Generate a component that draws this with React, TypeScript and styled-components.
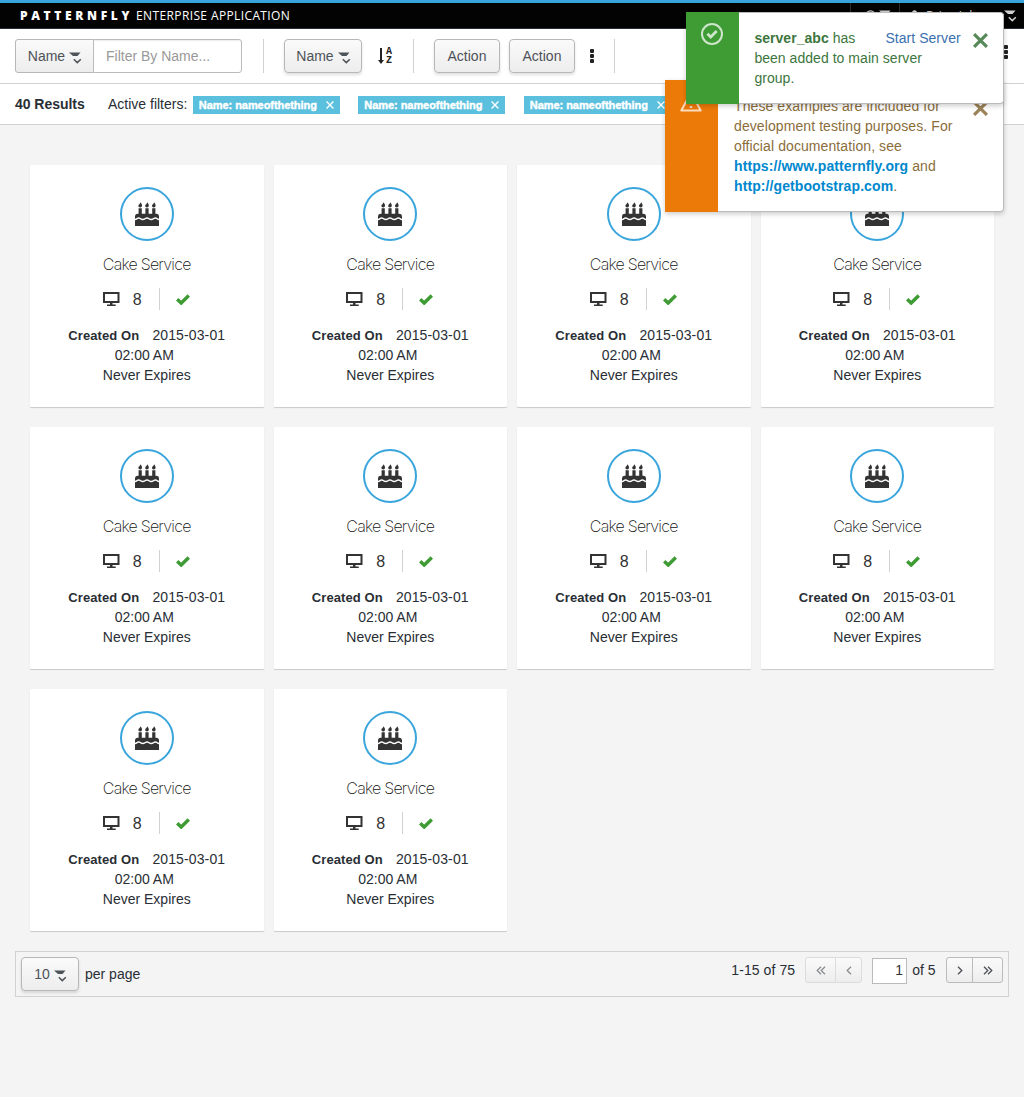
import React from "react";
import styled, { createGlobalStyle } from "styled-components";

const Global = createGlobalStyle`
  *{box-sizing:border-box}
  html{background:#f4f4f4}
  body{margin:0;background:#f4f4f4;color:#292e34;font:14px/20px "Liberation Sans",Arial,sans-serif}
  button,input{font:inherit;margin:0}
  svg{display:block;flex:none}
`;
const Page = styled.div`position:relative;width:1024px;height:1097px;overflow:hidden;`;
const Header = styled.header`height:29px;background:#030303;border-top:3px solid #39a5dc;border-bottom:1px solid #292e34;display:flex;align-items:center;padding-left:20px;color:#fff;font:12px/16px "Open Sans",sans-serif;`;
const Brand = styled.b`font-weight:800;letter-spacing:3.65px;width:116px;white-space:nowrap;`;
const Product = styled.span`letter-spacing:.38px;font-weight:400;`;
const Utility = styled.div`margin-left:auto;display:flex;height:25px;color:#d1d1d1;`;
const UtilityItem = styled.div<{ $w: number; $pad: number; $gap: number }>`width:${p => p.$w}px;border-left:1px solid #2b2b2b;display:flex;align-items:flex-start;gap:${p => p.$gap}px;padding:7px 0 0 ${p => p.$pad}px;white-space:nowrap;`;
const UserName = styled.span`width:71px;line-height:15px;margin-top:-2px;`;
const Toolbar = styled.div`height:55px;background:#fff;border-bottom:1px solid #d1d1d1;display:flex;align-items:center;padding-left:15px;`;
const Button = styled.button<{ $w: number; $flat?: boolean }>`
  flex:none;width:${p => p.$w}px;height:34px;padding:0;border:1px solid #b7b7b7;border-radius:${p => (p.$flat ? "3px 0 0 3px" : "4px")};
  background:linear-gradient(#fafafa,#ededed);color:#4d5258;display:flex;align-items:center;justify-content:center;gap:5px;
  box-shadow:${p => (p.$flat ? "none" : "0 2px 3px rgba(3,3,3,.12)")};
  svg{margin-top:4px}
`;
const MenuButton = styled(Button)`padding-left:1px;gap:4px;`;
const ActionButton = styled(Button)`& + &{margin-left:9px}`;
const FilterInput = styled.input`width:149px;height:34px;margin-left:-1px;border:1px solid #bbb;border-radius:0 3px 3px 0;padding:0 12px;background:#fff;box-shadow:inset 0 1px 1px rgba(3,3,3,.075);&::placeholder{color:#999;opacity:1}`;
const Divider = styled.i<{ $l: number; $r: number }>`flex:none;width:1px;height:34px;background:#d1d1d1;margin:0 ${p => p.$r}px 0 ${p => p.$l}px;`;
const Sort = styled.div`display:flex;margin-left:16px;width:35px;gap:2px;align-items:center;color:#222;`;
const SortLetters = styled.span`display:flex;flex-direction:column;align-items:center;font:bold 10px/9px "Liberation Mono",monospace;`;
const Kebab = styled.div<{ $l: number; $up?: boolean }>`margin-left:${p => p.$l}px;padding-bottom:${p => (p.$up ? 9 : 0)}px;display:flex;flex-direction:column;gap:1px;i{width:4px;height:4px;border-radius:1px;background:#222}`;
const Results = styled.div`height:41px;background:#fff;border-bottom:1px solid #d1d1d1;display:flex;align-items:center;padding-left:15px;b{width:93px;letter-spacing:-.03px}`;
const Chips = styled.div`display:flex;gap:18.5px;margin:1px 0 0 5.5px;`;
const Chip = styled.span`width:147px;height:18px;background:#5bc0de;color:#fff;font-size:11px;line-height:18px;font-weight:bold;display:flex;align-items:center;padding:0 6px;justify-content:space-between;letter-spacing:-.06px;-webkit-text-stroke:.4px #fff;`;
const Grid = styled.main`display:grid;grid-template-columns:repeat(4,1fr);gap:20px 10px;padding:40px 30px 20px;`;
const Card = styled.article`height:242px;background:#fff;border-radius:1px;box-shadow:0 1px 1px rgba(3,3,3,.175);display:flex;flex-direction:column;align-items:center;padding-top:22px;`;
const Circle = styled.div`width:54px;height:54px;border:2px solid #39a5dc;border-radius:50%;display:flex;align-items:center;justify-content:center;color:#333;`;
const Title = styled.h2`margin:13px 0 0;font:200 16px/20px Inter,sans-serif;letter-spacing:-.76px;color:#111;`;
const Status = styled.div`display:flex;align-items:center;height:22px;margin:14px 1px 0 0;font-size:16px;color:#333;`;
const Count = styled.span`margin:2px 17px 0 13px;`;
const StatusRule = styled.i`width:1px;height:22px;background:#d1d1d1;margin-right:16px;`;
const Details = styled.div`margin-top:15px;text-align:center;width:100%;`;
const Created = styled.div`display:flex;justify-content:center;gap:13px;b{font-size:13px;letter-spacing:.1px;padding-top:1px;height:20px}span{letter-spacing:.12px}`;
const Time = styled.div`padding-right:5px;`;
const Pager = styled.footer`margin:0 15px;height:46px;border:1px solid #d1d1d1;display:flex;align-items:flex-start;padding:5px;`;
const PerPage = styled.span`margin:7px 0 0 6px;`;
const Range = styled.span`margin:3px 10px 0 auto;letter-spacing:.08px;`;
const PageGroup = styled.div<{ $off?: boolean }>`height:26px;border:1px solid ${p => (p.$off ? "#dcdcdc" : "#bbb")};border-radius:3px;background:linear-gradient(#fafafa,#ededed);display:flex;color:${p => (p.$off ? "#8b8d8f" : "#4d5258")};`;
const PageStep = styled.button<{ $w: number; $line?: string }>`width:${p => p.$w}px;padding:0;border:0;border-right:${p => (p.$line ? "1px solid " + p.$line : "0")};background:none;color:inherit;display:flex;align-items:center;justify-content:center;`;
const PageInput = styled.input`width:35px;height:26px;margin:1px 5px 0 10px;border:1px solid #bbb;background:#fff;text-align:right;padding:0 3px 2px;color:#333;`;
const Of = styled.span`margin:3px 10.5px 0 0;`;
const Toast = styled.aside<{ $x: number; $y: number; $h: number; $ink: string }>`
  position:absolute;left:${p => p.$x}px;top:${p => p.$y}px;width:${p => 1004 - p.$x}px;height:${p => p.$h}px;display:flex;background:#fff;
  border:1px solid #bbb;border-left:0;border-radius:0 4px 4px 0;box-shadow:0 2px 5px rgba(3,3,3,.2);color:${p => p.$ink};
`;
const ToastIcon = styled.div<{ $c: string }>`flex:none;width:53px;margin:-1px 0;background:${p => p.$c};display:flex;justify-content:center;padding:11px 1px 0 0;color:rgba(255,255,255,.74);`;
const ToastText = styled.p<{ $w: number; $l: number; $track?: number }>`margin:15px 0 0 ${p => p.$l}px;width:${p => p.$w}px;white-space:nowrap;letter-spacing:${p => p.$track || 0}px;`;
const Start = styled.a`color:#3a6fb0;margin:15px 0 0;white-space:nowrap;letter-spacing:.05px;`;
const CloseBox = styled.button`border:0;background:none;padding:0;margin:20px 15px 0 auto;height:15px;color:inherit;opacity:.85;`;
const Link = styled.a`color:#0088ce;font-weight:bold;`;

const Caret = () => <svg width="13" height="12" viewBox="0 0 13 12"><path d="M0 .5h11.5L8.5 4H4z" fill="currentColor" /><path d="M4.8 7.3 8.3 10.6 11.8 7.3" fill="none" stroke="currentColor" strokeWidth="1.5" /></svg>;
const Close = ({ s, w }: { s: number; w: number }) => <svg width={s} height={s} viewBox="0 0 14 14"><path d="M1 1 13 13M13 1 1 13" stroke="currentColor" strokeWidth={w} /></svg>;
const Cake = () => (
  <svg width="24" height="24" viewBox="0 0 24 24" fill="currentColor">
    <path d="M3.6 6.3h3.2v5.5h3.6V6.3h3.2v5.5h3.6V6.3h3.2v5.5h.8q2.8.2 2.8 2.8v2.1c-1.5 0-1.7-1.4-3.6-1.4-2 0-2.1 1.4-4.2 1.4s-2.3-1.4-4.2-1.4-2.1 1.4-4.2 1.4-2.2-1.4-4.1-1.4S1.5 16.7 0 16.7v-2.1q0-2.6 2.8-2.8h.8z" />
    <path d="M0 18.2c2 0 2.2-1.4 3.7-1.4s2 1.4 4.1 1.4 2.5-1.4 4.2-1.4 2 1.4 4.2 1.4 2.6-1.4 4.2-1.4 1.7 1.4 3.6 1.4V24H0z" />
    {[5.2, 12, 18.8].map(x => <path key={x} d={`M${x + .3} .2c1 1.4 1.5 2.2 1.5 3.2 0 1.2-.7 2-1.8 2s-1.8-.7-1.8-1.7c0-1.4 1.9-1.700 2.100-3.500z`} />)}
  </svg>
);
const Screen = () => <svg width="17" height="15" viewBox="0 0 17 15"><path d="M1 1h14.5v9H1z" fill="none" stroke="currentColor" strokeWidth="2" /><path d="M7 10h2.5v2.5h3.2V14H4v-1.5h3z" fill="currentColor" /></svg>;
const Check = () => <svg width="14" height="11" viewBox="0 0 14 11"><path d="M1.2 5.3 5.2 9 12.8 1.5" fill="none" stroke="#3f9c35" strokeWidth="3.5" /></svg>;
const Angle = ({ dir, two }: { dir: number; two?: boolean }) => <svg width="10" height="9" viewBox="0 0 10 9"><g transform={dir > 0 ? undefined : "translate(10 0) scale(-1 1)"} fill="none" stroke="currentColor" strokeWidth="1.3"><path d={two ? "M1 .7 4.8 4.5 1 8.3M5 .7 8.8 4.5 5 8.3" : "M3 .7 6.8 4.5 3 8.3"} /></g></svg>;

const ServiceCard = () => (
  <Card>
    <Circle><Cake /></Circle>
    <Title>Cake Service</Title>
    <Status><Screen /><Count>8</Count><StatusRule /><Check /></Status>
    <Details>
      <Created><b>Created On</b><span>2015-03-01</span></Created>
      <Time>02:00 AM</Time>
      <div>Never Expires</div>
    </Details>
  </Card>
);

export default function App() {
  return (
    <Page>
      <Global />
      <Header>
        <Brand>PATTERNFLY</Brand><Product>ENTERPRISE APPLICATION</Product>
        <Utility>
          <UtilityItem $w={49} $pad={11} $gap={3}>
            <svg width="14" height="11" viewBox="-3 0 14 11"><circle cx="5.5" cy="5.5" r="4.7" fill="none" stroke="currentColor" strokeWidth="1.3" /></svg>
            <Caret />
          </UtilityItem>
          <UtilityItem $w={125} $pad={10} $gap={7}>
            <svg width="9" height="11" viewBox="0 0 9 11" fill="currentColor"><circle cx="4.5" cy="2.8" r="2.5" /><path d="M0 11V8l2-2h5l2 2v3z" /></svg>
            <UserName>Brian Johnson</UserName>
            <Caret />
          </UtilityItem>
        </Utility>
      </Header>
      <Toolbar>
        <MenuButton $w={79} $flat>Name <Caret /></MenuButton>
        <FilterInput placeholder="Filter By Name..." />
        <Divider $l={21} $r={20} />
        <MenuButton $w={78}>Name <Caret /></MenuButton>
        <Sort>
          <svg width="6" height="16" viewBox="0 0 6 16"><path d="M2 0h2v12h2L3 16 0 12h2z" fill="currentColor" /></svg>
          <SortLetters><span>A</span><span>Z</span></SortLetters>
        </Sort>
        <Divider $l={0} $r={20} />
        <ActionButton $w={66}>Action</ActionButton>
        <ActionButton $w={66}>Action</ActionButton>
        <Kebab $l={15}><i /><i /><i /></Kebab>
        <Divider $l={20} $r={0} />
        <Kebab $l={389} $up><i /><i /><i /></Kebab>
      </Toolbar>
      <Results>
        <b>40 Results</b><span>Active filters:</span>
        <Chips>{[0, 1, 2].map(i => <Chip key={i}>Name: nameofthething<Close s={8} w={2.4} /></Chip>)}</Chips>
      </Results>
      <Grid>{Array.from({ length: 10 }, (_, i) => <ServiceCard key={i} />)}</Grid>
      <Pager>
        <MenuButton $w={58}>10 <Caret /></MenuButton><PerPage>per page</PerPage>
        <Range>1-15 of 75</Range>
        <PageGroup $off><PageStep $w={30} $line="#dcdcdc"><Angle dir={-1} two /></PageStep><PageStep $w={25}><Angle dir={-1} /></PageStep></PageGroup>
        <PageInput defaultValue="1" /><Of>of 5</Of>
        <PageGroup><PageStep $w={26} $line="#bbb"><Angle dir={1} /></PageStep><PageStep $w={29}><Angle dir={1} two /></PageStep></PageGroup>
      </Pager>
      <Toast $x={665} $y={80} $h={132} $ink="#8a6d3b">
        <ToastIcon $c="#ec7a08"><svg width="22" height="21" viewBox="0 0 22 21"><path d="M11 1.5 20.7 19.5H1.3z" fill="none" stroke="currentColor" strokeWidth="2" strokeLinejoin="round" /><path d="M11 7v6M11 15v2" stroke="currentColor" strokeWidth="2.4" /></svg></ToastIcon>
        <ToastText $w={225} $l={16} $track={.09}>These examples are included for<br />development testing purposes. For<br />official documentation, see<br /><Link>https://www.patternfly.org</Link> and<br /><Link>http://getbootstrap.com</Link>.</ToastText>
        <CloseBox><Close s={15} w={3} /></CloseBox>
      </Toast>
      <Toast $x={686} $y={12} $h={92} $ink="#3c763d">
        <ToastIcon $c="#3f9c35"><svg width="22" height="22" viewBox="0 0 22 22"><circle cx="11" cy="11" r="10" fill="none" stroke="currentColor" strokeWidth="2" /><path d="m6.4 10.8 3.3 3.2 6-6" fill="none" stroke="currentColor" strokeWidth="2.8" /></svg></ToastIcon>
        <ToastText $w={131} $l={15.4} $track={.04}><b>server_abc</b> has<br />been added to main server<br />group.</ToastText>
        <Start>Start Server</Start>
        <CloseBox><Close s={15} w={3} /></CloseBox>
      </Toast>
    </Page>
  );
}
